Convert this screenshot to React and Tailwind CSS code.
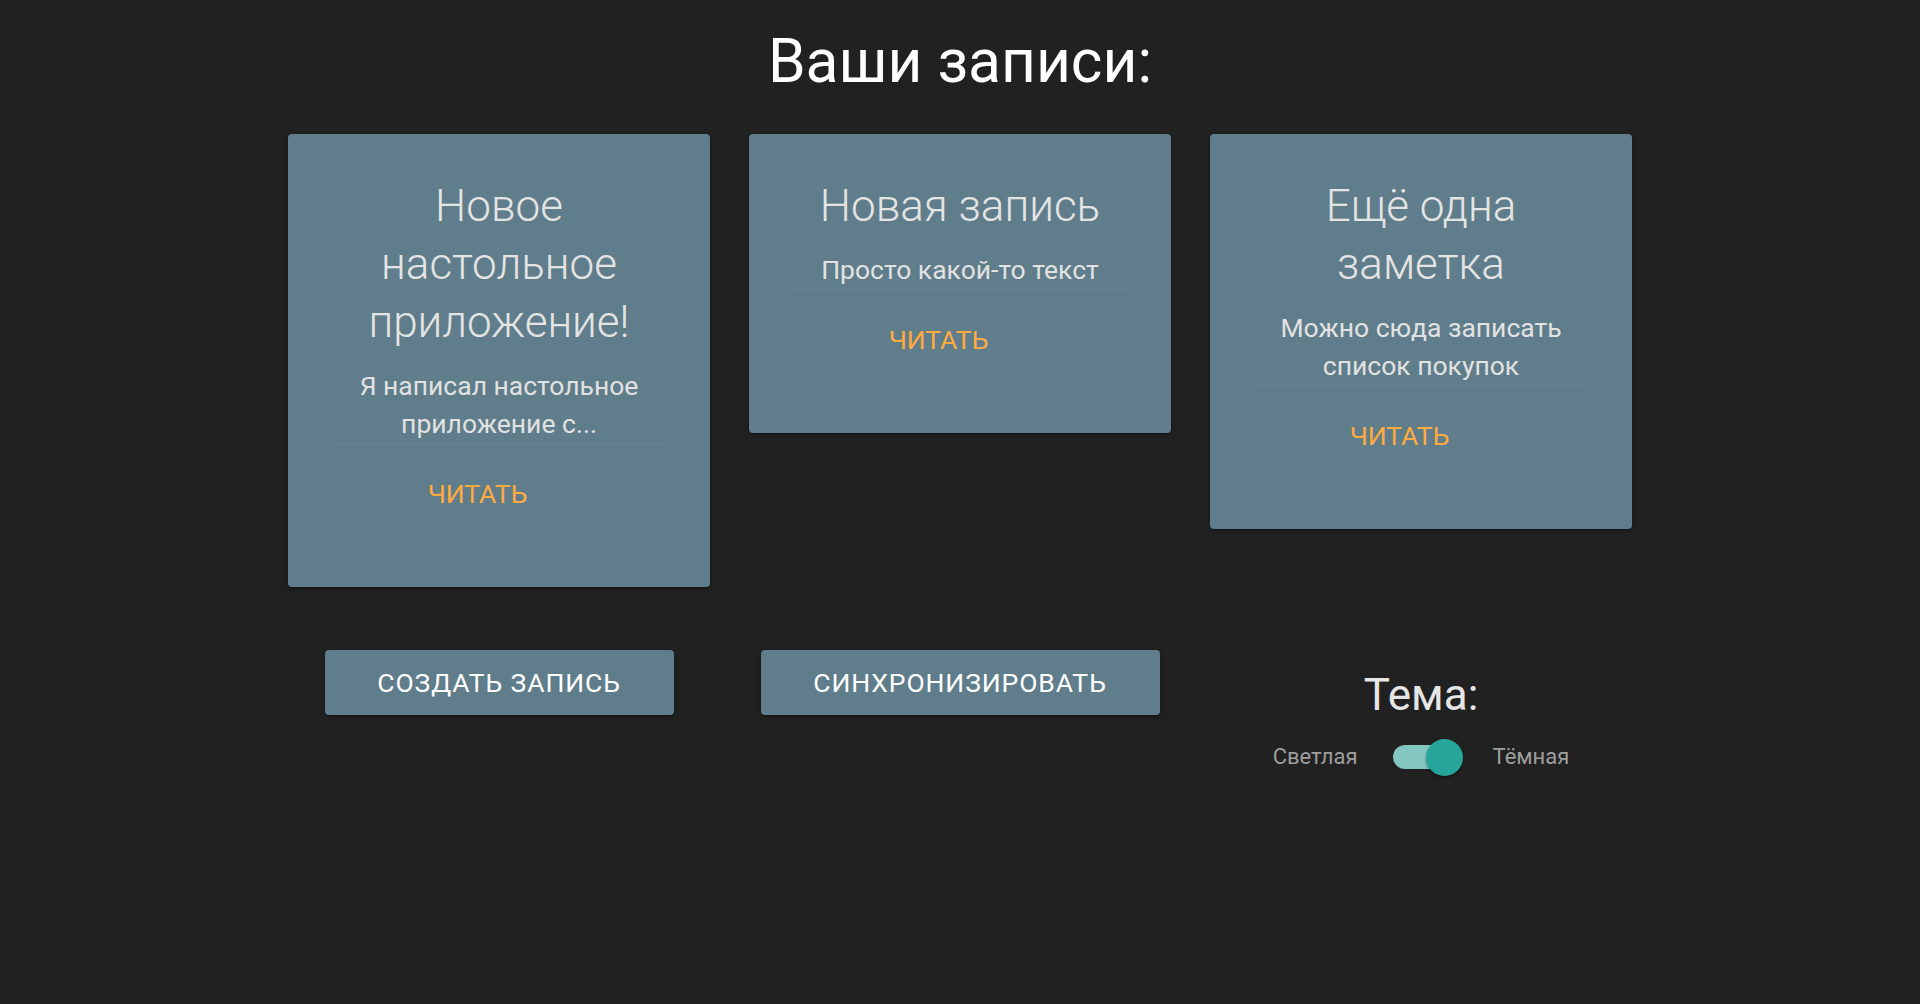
import React, { useState } from 'react';

const notes = [
    { id: 1, title: 'Новое настольное приложение!', text: 'Я написал настольное приложение с...' },
    { id: 2, title: 'Новая запись', text: 'Просто какой-то текст' },
    { id: 3, title: 'Ещё одна заметка', text: 'Можно сюда записать список покупок' },
];

const depth = 'shadow-[0_2px_2px_0_rgba(0,0,0,0.14),0_3px_1px_-2px_rgba(0,0,0,0.12),0_1px_5px_0_rgba(0,0,0,0.2)]';

const NoteCard = ({ note }) => (
    <div className={`w-[422px] bg-[#607d8b] rounded-[4px] ${depth}`}>
        <div className="px-[40px] pt-[43px] pb-[16px] text-center">
            <h3 className="text-[44px] leading-[58px] font-light text-[#e4e4e4]">{note.title}</h3>
        </div>
        <div className="px-[44px]">
            <p className="text-[26.5px] leading-[38px] text-[#e2e2e2] text-center">{note.text}</p>
            <div className="border-t border-[rgba(160,160,160,0.2)] pt-[34px] pb-[77px] text-center">
                <a href="#" className="inline-block mr-[43px] text-[26.5px] leading-[32px] text-[#ffab40] uppercase">Читать</a>
            </div>
        </div>
    </div>
);

const App = () => {
    const [dark, setDark] = useState(true);

    return (
        <div className="min-h-[1004px] bg-[#212121] font-['Roboto',sans-serif]">
            <h1 className="pt-[30px] text-center text-[60.5px] leading-[64px] text-white">Ваши записи:</h1>

            <div className="w-[1344px] mx-auto mt-[40px] flex items-start gap-[39px]">
                {notes.map((n) => <NoteCard key={n.id} note={n} />)}
            </div>

            <div className="w-[1344px] mx-auto mt-[63px] flex items-start gap-[39px]">
                <div className="w-[422px] flex justify-center">
                    <button className={`w-[349px] h-[65px] bg-[#607d8b] rounded-[4px] text-white text-[26.5px] tracking-[0.9px] uppercase ${depth}`}>
                        Создать запись
                    </button>
                </div>
                <div className="w-[422px] flex justify-center">
                    <button className={`w-[399px] h-[65px] bg-[#607d8b] rounded-[4px] text-white text-[26.5px] tracking-[0.9px] uppercase ${depth}`}>
                        Синхронизировать
                    </button>
                </div>
                <div className="w-[422px] pt-[20px] flex flex-col items-center">
                    <h4 className="text-[44px] leading-[50px] text-[#e6e6e6]">Тема:</h4>
                    <div className="mt-[18px] h-[37px] flex items-center text-[22px] text-[#9e9e9e]">
                        <span>Светлая</span>
                        <button
                            onClick={() => setDark(!dark)}
                            className={`relative mx-[35px] w-[65px] h-[24px] rounded-full ${dark ? 'bg-[#84c7c1]' : 'bg-[#818181]'}`}
                        >
                            <span className={`absolute top-[-6px] w-[37px] h-[37px] rounded-full shadow-[0_2px_3px_rgba(0,0,0,0.35)] ${dark ? 'left-[33px] bg-[#26a69a]' : 'left-[-5px] bg-[#f1f1f1]'}`} />
                        </button>
                        <span>Тёмная</span>
                    </div>
                </div>
            </div>
        </div>
    );
};

export default App;
